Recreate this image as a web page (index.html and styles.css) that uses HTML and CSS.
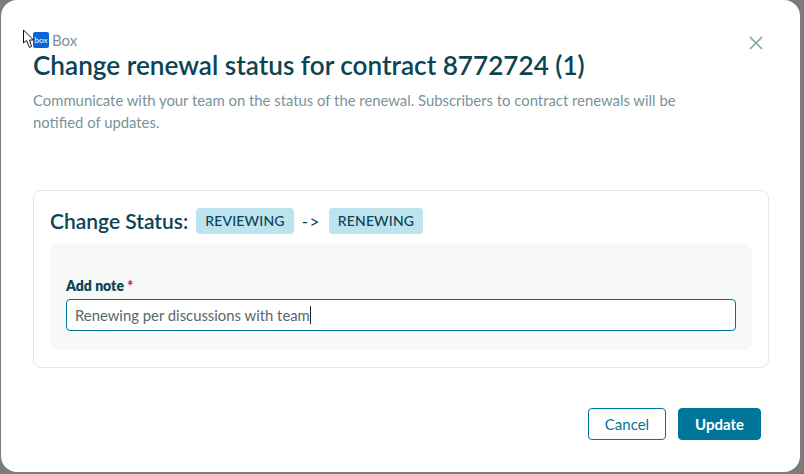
FILE: index.html
```html
<!DOCTYPE html>
<html lang="en">
<head>
  <meta charset="UTF-8">
  <meta name="viewport" content="width=device-width, initial-scale=1.0">
  <title>Change renewal status</title>
  <link rel="stylesheet" href="styles.css">
</head>
<body>
  <div class="modal">
    <button class="close-btn" aria-label="Close">
      <svg width="16" height="16" viewBox="0 0 16 16"><path d="M2 2 L14 14 M14 2 L2 14" stroke="#8aa3ab" stroke-width="1.7" fill="none"/></svg>
    </button>

    <div class="vendor">
      <span class="vendor-logo">box</span>
      <span>Box</span>
    </div>
    <h1>Change renewal status for contract 8772724 (1)</h1>
    <p class="subtitle">Communicate with your team on the status of the renewal. Subscribers to contract renewals will be notified of updates.</p>

    <div class="status-card">
      <div class="status-row">
        <h2>Change Status:</h2>
        <span class="status-tag">REVIEWING</span>
        <span class="arrow">-&gt;</span>
        <span class="status-tag">RENEWING</span>
      </div>
      <div class="note-box">
        <label class="note-label" for="note">Add note <span class="required">*</span></label>
        <div class="note-input" id="note">Renewing per discussions with team<span class="caret"></span></div>
      </div>
    </div>

    <div class="actions">
      <button class="cancel-btn">Cancel</button>
      <button class="update-btn">Update</button>
    </div>

    <!-- mouse pointer caught in the screenshot -->
    <svg class="pointer" width="14" height="21" viewBox="0 0 14 21"><path d="M0.5 1 L0.5 14 L3.5 11.5 L6.5 18.5 L8.5 17.5 L6.5 11 L10.5 11 Z" fill="#fff" stroke="#111" stroke-width="1"/></svg>
  </div>
</body>
</html>
```

FILE: styles.css
```css
* {
  box-sizing: border-box;
}

body {
  margin: 0;
  width: 804px;
  height: 474px;
  overflow: hidden;
  background-color: #7b7b7b;
  font-family: Lato, "Open Sans", sans-serif;
  color: #0b4453;
}

.modal {
  position: relative;
  width: 799px;
  height: 472px;
  margin-left: 1px;
  padding: 31px 32px 0;
  background: white;
  border-radius: 16px;
}

.close-btn {
  position: absolute;
  top: 35px;
  right: 36px;
  width: 16px;
  height: 16px;
  padding: 0;
  border: none;
  background: none;
}

.close-btn svg {
  display: block;
}

.pointer {
  position: absolute;
  left: 22px;
  top: 29px;
}

.vendor {
  display: flex;
  align-items: center;
  gap: 3px;
  height: 18px;
  font-size: 15px;
  color: #7a9299;
}

.vendor-logo {
  width: 16px;
  height: 16px;
  border-radius: 2px;
  background-color: #0a66d8;
  color: white;
  font-size: 8px;
  line-height: 16px;
  text-align: center;
}

h1 {
  margin: 0;
  font-size: 26.15px;
  line-height: 32px;
  font-weight: 600;
}

.subtitle {
  width: 670px;
  margin: 8px 0 0;
  font-size: 14.85px;
  line-height: 22px;
  color: #7a9299;
}

.status-card {
  width: 736px;
  height: 178px;
  margin-top: 57px;
  padding: 17px 16px 16px;
  border: 1px solid #e4e7e8;
  border-radius: 8px;
}

.status-row {
  display: flex;
  align-items: center;
  gap: 8px;
  height: 26px;
}

h2 {
  margin: -2px 0 0;
  font-size: 21px;
  font-weight: 600;
}

.status-tag {
  padding: 0 9px;
  height: 26px;
  line-height: 26px;
  border-radius: 4px;
  background-color: #bde3ef;
  font-size: 14px;
  font-weight: 500;
  letter-spacing: 0.15px;
}

.arrow {
  font-size: 17px;
  letter-spacing: 1.5px;
}

.note-box {
  height: 106px;
  margin-top: 10px;
  padding: 33px 16px 0;
  background-color: #f6f9f8;
  border-radius: 8px;
}

.note-label {
  display: block;
  font-size: 14px;
  line-height: 18px;
  font-weight: 800;
}

.required {
  color: #d0274d;
}

.note-input {
  display: flex;
  align-items: center;
  height: 32px;
  margin-top: 4px;
  padding: 0 8px;
  background: white;
  border: 1px solid #00759a;
  border-radius: 4px;
  font-size: 14.85px;
  color: #5a666b;
}

.caret {
  width: 1px;
  height: 18px;
  background-color: #222;
}

.actions {
  display: flex;
  justify-content: flex-end;
  gap: 12px;
  width: 728px;
  margin-top: 40px;
}

.cancel-btn, .update-btn {
  height: 32px;
  border-radius: 4px;
  font-family: inherit;
  font-size: 15px;
  padding: 0;
}

.cancel-btn {
  width: 78px;
  background: white;
  border: 1px solid #00759a;
  color: #00759a;
}

.update-btn {
  width: 83px;
  background-color: #00759a;
  border: 1px solid #00759a;
  color: white;
  font-weight: 700;
}
```
